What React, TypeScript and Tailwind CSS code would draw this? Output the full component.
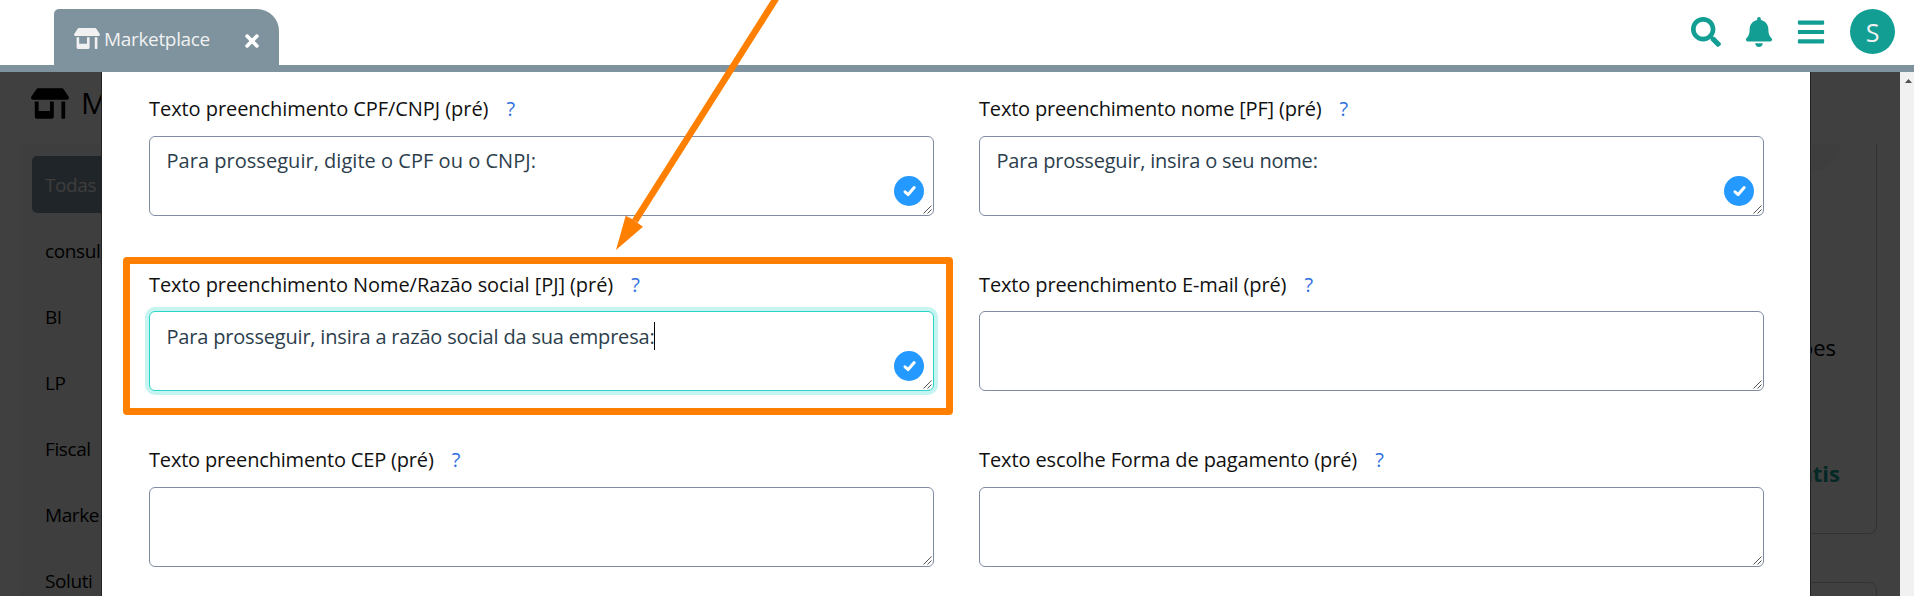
import { FaBars, FaBell, FaSearch, FaStoreAlt, FaTimes } from "react-icons/fa";

type FieldProps = {
  label: string;
  value?: string;
  labelClass?: string;
  valueClass?: string;
  focused?: boolean;
};

function CheckBadge() {
  return (
    <span className="absolute right-[9px] top-[39px] flex size-[30px] items-center justify-center rounded-full bg-[#2499ff]">
      <svg viewBox="0 0 30 30" className="size-[30px]" fill="none" stroke="#fff" strokeWidth="3" strokeLinecap="round" strokeLinejoin="round">
        <path d="M11 15.8 14.2 18.6 20.2 11.6" />
      </svg>
    </span>
  );
}

function ResizeHandle() {
  return (
    <svg viewBox="0 0 9 9" className="absolute bottom-[1px] right-[1px] size-[9px]" fill="none" stroke="#555" strokeWidth="1">
      <path d="M0.5 8.5 8.5 0.5M4.5 8.5 8.5 4.5" />
    </svg>
  );
}

function Field({ label, value = "", labelClass = "", valueClass = "", focused = false }: FieldProps) {
  return (
    <div className="w-[785px]">
      <div className="flex h-[41px] items-start text-[20px] leading-[27px] text-[#111]">
        <span className={`whitespace-nowrap ${labelClass}`}>{label}</span>
        <span className={`ml-[18px] text-[#2f6fe0] ${labelClass}`}>?</span>
      </div>
      <div
        className={`relative h-[80px] rounded-[6px] border bg-white pl-[16.5px] ${
          focused ? "border-[#2bd5c8] pt-[11px] shadow-[0_0_0_4px_#c6f5f1]" : "border-[#7f8ca3] pt-[10px]"
        }`}
      >
        <div className="flex h-[28px] items-center text-[20px] leading-[28px] text-[#2c3e4c]">
          <span className={`whitespace-nowrap ${valueClass}`}>{value}</span>
          {focused && <span className="-ml-px -mt-[2px] h-[28px] w-px bg-black" />}
        </div>
        {value && <CheckBadge />}
        <ResizeHandle />
      </div>
    </div>
  );
}

const categories = ["consul", "BI", "LP", "Fiscal", "Marke", "Soluti"];

export default function App() {
  return (
    <div className="relative flex h-[596px] w-[1914px] flex-col overflow-hidden bg-white font-['Open_Sans','Noto_Sans',sans-serif]">
      <header className="flex h-[72px] shrink-0 items-start justify-between border-b-[7px] border-[#7e939e] bg-white pl-[54px] pr-[19px] pt-[9px]">
        <div className="flex h-[56px] w-[225px] items-center rounded-tl-[5px] rounded-tr-[22px] bg-[#7e939e] pl-[20px] pr-[17px] text-[#f1f1f1]">
          <FaStoreAlt className="mt-[2px] h-[21px] w-[26px]" />
          <span className="ml-[4px] mt-[4px] text-[19px] tracking-[-0.33px]">Marketplace</span>
          <FaTimes className="ml-auto mt-[8px] size-[20px] text-white" />
        </div>
        <div className="flex h-[45px] items-center text-[#139e94]">
          <FaSearch className="size-[30px]" />
          <FaBell className="ml-[23px] size-[30px]" />
          <FaBars className="ml-[22px] size-[30px]" />
          <span className="ml-[24px] flex size-[45px] items-center justify-center rounded-full bg-[#139e94] pt-[2px] text-[25px] text-[#f1f1f1]">S</span>
        </div>
      </header>

      <div className="flex h-[524px]">
        <main className="relative h-[524px] w-[1900px] overflow-hidden bg-white">
          <div className="flex h-full">
            <div className="w-[140px] shrink-0 pl-[20px]">
              <div className="flex h-[72px] items-center pb-[12px] pl-[11px] text-black">
                <FaStoreAlt className="mt-[2px] h-[31px] w-[38px] shrink-0" />
                <span className="ml-[12px] text-[30px]">M</span>
              </div>
              <div className="h-[452px] bg-[#f8f8f8] pl-[12px] pt-[12px] text-[19px] tracking-[-0.4px]">
                <div className="flex h-[57px] items-center rounded-[5px] bg-[#7e939e] pl-[13px] pt-[2px] text-[#f1f1f1]">Todas</div>
                {categories.map((name) => (
                  <div key={name} className="mt-[9px] flex h-[57px] items-center pl-[13px] pt-[2px] text-black">{name}</div>
                ))}
              </div>
            </div>
            <div className="ml-auto mr-[23px] w-[300px]">
              <div className="mt-[72px] h-[390px] rounded-b-[8px] border border-t-0 border-[#c8c8c8] pr-[36px] text-right">
                <div className="ml-auto h-[27px] w-[120px] rounded-br-[27px] bg-[#f6f6f6]" />
                <p className="mt-[161px] pr-[4px] text-[22px] leading-[30px] text-black">ões</p>
                <p className="mt-[96px] text-[22px] font-bold leading-[30px] text-[#139e94]">átis</p>
              </div>
              <div className="mt-[48px] h-[80px] rounded-[8px] border border-[#c8c8c8]" />
            </div>
          </div>

          <div className="absolute inset-0 bg-black/75" />
          <section className="absolute bottom-0 left-[101px] top-0 w-[1710px] border-x border-[#222] bg-white pl-[47px] pt-[23px]">
            <div className="grid grid-cols-[785px_785px] grid-rows-[175px_176px_176px] gap-x-[45px]">
              <Field label="Texto preenchimento CPF/CNPJ (pré)" labelClass="tracking-[-0.06px]" value="Para prosseguir, digite o CPF ou o CNPJ:" valueClass="tracking-[0.03px]" />
              <Field label="Texto preenchimento nome [PF] (pré)" labelClass="tracking-[-0.18px]" value="Para prosseguir, insira o seu nome:" valueClass="tracking-[-0.2px]" />
              <Field label="Texto preenchimento Nome/Razão social [PJ] (pré)" labelClass="relative top-px tracking-[-0.07px]" value="Para prosseguir, insira a razão social da sua empresa:" valueClass="tracking-[-0.19px]" focused />
              <Field label="Texto preenchimento E-mail (pré)" labelClass="relative top-px tracking-[-0.125px]" />
              <Field label="Texto preenchimento CEP (pré)" labelClass="tracking-[-0.18px]" />
              <Field label="Texto escolhe Forma de pagamento (pré)" labelClass="tracking-[-0.11px]" />
            </div>
          </section>
        </main>
        <div className="flex w-[14px] justify-end bg-[#f1f1f1] pr-[2px] pt-[7px]">
          <svg viewBox="0 0 7 4" className="h-[4px] w-[7px]"><path d="M0 4 3.5 0 7 4Z" fill="#505050" /></svg>
        </div>
      </div>

      <div className="absolute left-[123px] top-[257px] h-[158px] w-[830px] rounded-[4px] border-[7px] border-[#ff8000]" />
      <svg viewBox="0 0 200 260" className="absolute left-[600px] top-0 h-[260px] w-[200px]">
        <path d="M176.9 -3 35 221" stroke="#ff8000" strokeWidth="6.6" />
        <path d="M16 250 25.7 215.8 33 219.5 37 222.5 43 226.8Z" fill="#ff8000" />
      </svg>
    </div>
  );
}
